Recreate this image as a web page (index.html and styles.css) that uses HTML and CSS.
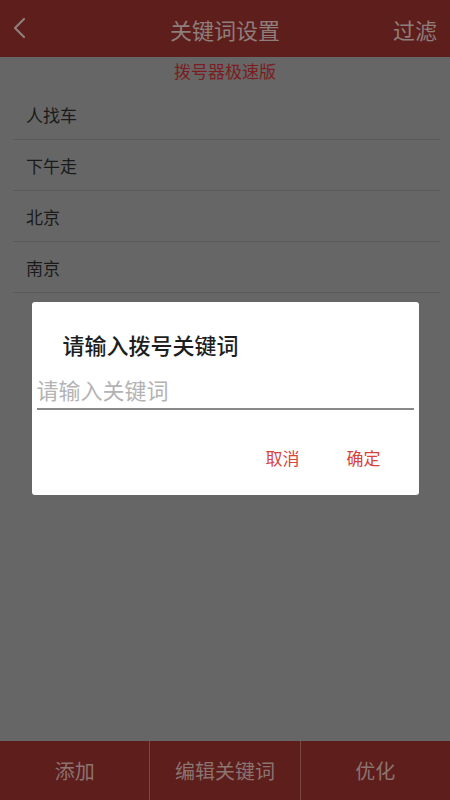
FILE: index.html
```html
<!DOCTYPE html>
<html lang="zh">
<head>
<meta charset="utf-8">
<title>关键词设置</title>
<link rel="stylesheet" href="styles.css">
</head>
<body>
<div class="app">
  <header class="topbar">
    <span class="back">
      <svg width="14" height="22" viewBox="0 0 14 22"><path d="M12 2 L3 11 L12 20" fill="none" stroke="#8e7e7c" stroke-width="2.2" stroke-linecap="round" stroke-linejoin="round"/></svg>
    </span>
    <span class="title">关键词设置</span>
    <span class="action">过滤</span>
  </header>
  <div class="subtitle">拨号器极速版</div>
  <ul class="list">
    <li class="row">人找车</li>
    <li class="row">下午走</li>
    <li class="row">北京</li>
    <li class="row">南京</li>
  </ul>
  <div class="spacer"></div>
  <nav class="bottombar">
    <span class="tab">添加</span>
    <span class="tab">编辑关键词</span>
    <span class="tab">优化</span>
  </nav>
</div>
<div class="backdrop">
  <div class="dialog">
    <div class="dlg-title">请输入拨号关键词</div>
    <div class="dlg-input">请输入关键词</div>
    <div class="dlg-buttons">
      <span class="btn">取消</span>
      <span class="btn">确定</span>
    </div>
  </div>
</div>
</body>
</html>
```
FILE: styles.css
```css
* { box-sizing: border-box; }
html, body { margin: 0; padding: 0; }
body {
  width: 450px;
  height: 800px;
  overflow: hidden;
  background: #666666;
  font-family: "Noto Sans CJK SC", "Noto Sans", sans-serif;
  position: relative;
}
.app {
  height: 800px;
  display: flex;
  flex-direction: column;
}
.topbar {
  height: 57px;
  background: #5e1e1b;
  display: flex;
  align-items: center;
  color: #8e7e7c;
  font-size: 22px;
  flex-shrink: 0;
}
.back {
  width: 70px;
  display: flex;
  align-items: center;
  padding-left: 12px;
  margin-top: -2px;
}
.title {
  flex: 1;
  text-align: center;
}
.action {
  width: 70px;
  text-align: right;
  padding-right: 13px;
}
.subtitle {
  text-align: center;
  color: #7c1c20;
  font-size: 17px;
  line-height: 24px;
  margin-top: 2px;
}
.list {
  list-style: none;
  margin: 6px 10px 0 13px;
  padding: 0;
}
.row {
  height: 51px;
  line-height: 52px;
  padding-left: 13px;
  font-size: 17px;
  color: #1a1a1a;
  border-bottom: 1px solid #5a5a5a;
}
.spacer { flex: 1; }
.bottombar {
  height: 59px;
  background: #5e1e1b;
  display: flex;
  flex-shrink: 0;
}
.tab {
  flex: 1;
  display: flex;
  align-items: center;
  justify-content: center;
  color: #8b7471;
  font-size: 20px;
  border-left: 1px solid #784844;
}
.tab:first-child { border-left: none; }
.backdrop {
  position: absolute;
  inset: 0;
  display: flex;
  align-items: flex-start;
  justify-content: center;
  padding-top: 302px;
}
.dialog {
  width: 387px;
  height: 193px;
  background: #ffffff;
  border-radius: 3px;
  display: flex;
  flex-direction: column;
  padding: 0 5px;
}
.dlg-title {
  font-size: 22px;
  font-weight: 500;
  color: #1e1e1e;
  padding-left: 26px;
  margin-top: 26px;
  line-height: 32px;
}
.dlg-input {
  margin-top: 13px;
  font-size: 22px;
  color: #b3b3b3;
  line-height: 32px;
  padding-left: 0;
  padding-bottom: 3px;
  border-bottom: 2px solid #8a8a8a;
}
.dlg-buttons {
  display: flex;
  justify-content: flex-end;
  gap: 47px;
  padding-right: 33px;
  margin-top: 36px;
}
.btn {
  font-size: 17px;
  color: #d6453c;
  line-height: 24px;
}
```
